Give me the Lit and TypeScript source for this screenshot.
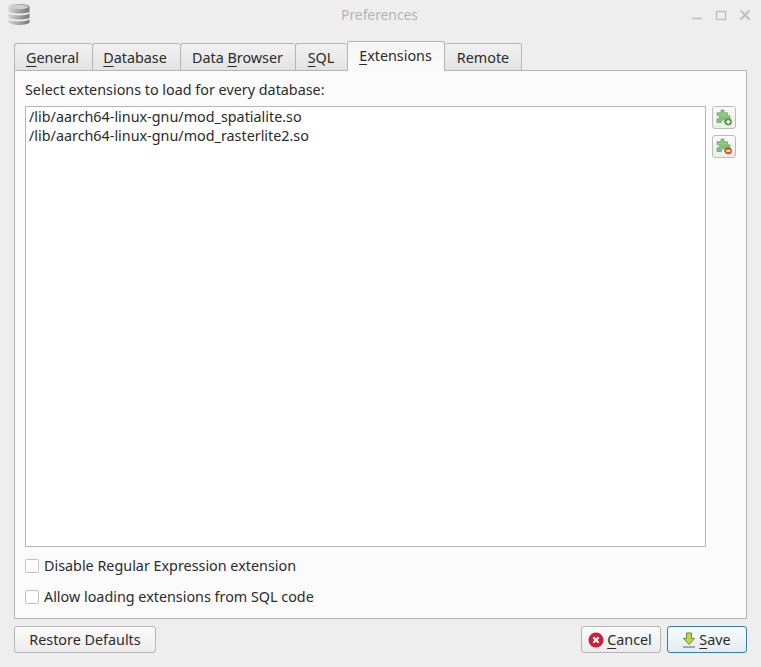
import { LitElement, html, css, svg } from "lit";
import { customElement } from "lit/decorators.js";

const puzzle = (badge: "add" | "remove") => svg`
<svg class="puzzle" width="16" height="17" viewBox="0 0 16 17">
  <path d="M5 1h3v1.500c0 .6.400.8.800 1.300h2.700v2.600h1a1.600 1.600 0 0 1 0 3.400h-1v3.700h-3v-1.400a1.500 1.500 0 0 0-3 0v1.400H1v-3.700h1a1.700 1.700 0 0 0 0-3.400H1V3.800h3.400c.4-.5.600-.7.600-1.300z" fill="#84c17c" stroke="#6aae63" stroke-width=".8"/>
  <path d="M2 4.800h8.500v1.500H2z" fill="#a2d69a" opacity=".6"/>
  <circle cx="12.300" cy="12.800" r="3.300" fill="${badge === "add" ? "#5a9e3a" : "#e25f14"}" stroke="${badge === "add" ? "#3f7f28" : "#b8480c"}" stroke-width=".6"/>
  ${badge === "add"
    ? svg`<path d="M12.300 10.800v4M10.300 12.800h4" stroke="#fff" stroke-width="1.500"/>`
    : svg`<path d="M10.300 12.800h4" stroke="#fff" stroke-width="1.700"/>`}
</svg>`;

@customElement("app-root")
export class AppRoot extends LitElement {
  static styles = css`
    :host {
      display: block;
      width: 761px;
      height: 667px;
      font-family: "Noto Sans", "Open Sans", sans-serif;
      font-size: 14.35px;
      color: #2b2b2b;
    }
    * { box-sizing: border-box; }
    .window {
      width: 761px;
      height: 667px;
      background: #eeeeee;
      display: flex;
      flex-direction: column;
      padding: 0 14px 14px;
    }
    .titlebar {
      height: 41px;
      margin: 0 -14px;
      padding: 4px 10px 0 8px;
      flex: none;
      display: grid;
      grid-template-columns: 1fr auto 1fr;
      align-items: start;
    }
    .appicon { display: block; }
    .title {
      font-size: 13.8px;
      color: #b4b4b4;
      line-height: 22px;
    }
    .winctl {
      display: flex;
      justify-content: flex-end;
      gap: 12px;
      margin-top: 5px;
    }
    .tabs {
      display: flex;
      align-items: flex-end;
      height: 30px;
      flex: none;
      position: relative;
      z-index: 1;
      margin-bottom: -1px;
    }
    .tab {
      height: 28px;
      border: 1px solid #b5b5b5;
      border-right: 0;
      border-radius: 3px 3px 0 0;
      background: linear-gradient(#f1f1f1, #e3e3e3);
      text-align: center;
      line-height: 28px;
      white-space: nowrap;
      color: #2b2b2b;
    }
    .tab.last { border-right: 1px solid #b5b5b5; }
    .tab.active {
      height: 30px;
      background: linear-gradient(#f6f6f6, #fbfbfb);
      border-right: 1px solid #b5b5b5;
      border-bottom: 0;
      line-height: 27px;
    }
    .tab.after { border-left: 0; }
    .t-general { width: 78px; padding-right: 2px; }
    .t-database { width: 88px; padding-right: 3px; }
    .t-browser { width: 115px; padding-right: 1px; }
    .t-sql { width: 52px; padding-right: 1px; }
    .t-ext { width: 98px; padding-right: 1px; }
    .t-remote { width: 77px; }
    u { text-decoration-thickness: 1px; text-underline-offset: 3px; }
    .pane {
      flex: 1;
      background: #fbfbfb;
      border: 1px solid #b5b5b5;
      padding: 9px 10px 11px;
      display: flex;
      flex-direction: column;
      min-height: 0;
    }
    .label { line-height: 20px; height: 26px; }
    .mid { flex: 1; display: flex; gap: 6px; min-height: 0; }
    .list {
      width: 681px;
      height: 441px;
      background: #fff;
      border: 1px solid #b5b5b5;
      padding: 0 3px;
      line-height: 19px;
    }
    .side { display: flex; flex-direction: column; gap: 6px; }
    .iconbtn {
      width: 24px;
      height: 23px;
      border: 1px solid #bdbdbd;
      border-radius: 3px;
      background: linear-gradient(#fafafa, #ececec);
      display: flex;
      align-items: center;
      justify-content: center;
    }
    .check {
      display: flex;
      align-items: center;
      gap: 5px;
      line-height: 20px;
      height: 20px;
    }
    .check.first { margin-bottom: 11px; }
    .box {
      width: 14px;
      height: 14px;
      background: #fff;
      border: 1px solid #c2c2c2;
      border-radius: 2px;
      flex: none;
    }
    .footer {
      display: flex;
      flex: none;
      margin-top: 7px;
      height: 27px;
      gap: 6px;
    }
    .btn {
      height: 27px;
      border: 1px solid #b5b5b5;
      border-radius: 3px;
      background: linear-gradient(#fbfbfb, #ececec);
      display: flex;
      align-items: center;
      justify-content: center;
      gap: 3px;
      white-space: nowrap;
    }
    .btn.restore { width: 142px; margin-right: auto; }
    .btn.action { width: 80px; padding-right: 2px; }
    .btn.default {
      gap: 2px;
      border-color: #3a7ba8;
      background: linear-gradient(#f8fbfd, #e3ecf2);
    }
  `;

  render() {
    return html`
      <div class="window">
        <div class="titlebar">
          <svg class="appicon" width="22" height="22" viewBox="0 0 22 22">
            <defs>
              <linearGradient id="db" x1="0" x2="1" y1="0" y2="0">
                <stop offset="0" stop-color="#d8d8d8"/><stop offset=".45" stop-color="#a8a8a8"/><stop offset="1" stop-color="#777"/>
              </linearGradient>
            </defs>
            <path d="M.5 3c0-4 21-4 21 0v15c0 4-21 4-21 0z" fill="url(#db)"/>
            <ellipse cx="11" cy="3" rx="9.500" ry="2.200" fill="#cfcfcf"/>
            <path d="M.5 7.500c2 2.800 19 2.800 21 0v1.800c-2 2.800-19 2.800-21 0zM.5 13.500c2 2.800 19 2.800 21 0v1.800c-2 2.800-19 2.800-21 0z" fill="#f2f2f2"/>
          </svg>
          <div class="title">Preferences</div>
          <div class="winctl">
            <svg width="12" height="12" viewBox="0 0 12 12"><path d="M1 9.500h10" stroke="#bdbdbd" stroke-width="1.600"/></svg>
            <svg width="12" height="12" viewBox="0 0 12 12"><rect x="1.500" y="2.500" width="9" height="8" fill="none" stroke="#bdbdbd" stroke-width="1.300"/></svg>
            <svg width="12" height="12" viewBox="0 0 12 12"><path d="M1.500 1.500l9 9M10.500 1.500l-9 9" stroke="#bdbdbd" stroke-width="1.800"/></svg>
          </div>
        </div>
        <div class="tabs">
          <div class="tab t-general"><u>G</u>eneral</div>
          <div class="tab t-database"><u>D</u>atabase</div>
          <div class="tab t-browser">Data <u>B</u>rowser</div>
          <div class="tab t-sql"><u>S</u>QL</div>
          <div class="tab active t-ext"><u>E</u>xtensions</div>
          <div class="tab last after t-remote">Remote</div>
        </div>
        <div class="pane">
          <div class="label">Select extensions to load for every database:</div>
          <div class="mid">
            <div class="list">
              <div>/lib/aarch64-linux-gnu/mod_spatialite.so</div>
              <div>/lib/aarch64-linux-gnu/mod_rasterlite2.so</div>
            </div>
            <div class="side">
              <div class="iconbtn">${puzzle("add")}</div>
              <div class="iconbtn">${puzzle("remove")}</div>
            </div>
          </div>
          <div class="check first"><span class="box"></span>Disable Regular Expression extension</div>
          <div class="check"><span class="box"></span>Allow loading extensions from SQL code</div>
        </div>
        <div class="footer">
          <div class="btn restore">Restore Defaults</div>
          <div class="btn action">
            <svg width="16" height="16" viewBox="0 0 16 16"><circle cx="8" cy="8" r="7.500" fill="#cc1f3a"/><path d="M5.300 5.300l5.400 5.400M10.700 5.300l-5.400 5.400" stroke="#fff" stroke-width="2"/></svg>
            <span><u>C</u>ancel</span>
          </div>
          <div class="btn action default">
            <svg width="16" height="16" viewBox="0 0 16 16"><path d="M5.500 1h5v5.500h3L8 12.500 2.500 6.500h3z" fill="#b9d94c" stroke="#6f8f2a"/><path d="M2 15h12" stroke="#777" stroke-width="1.200"/></svg>
            <span><u>S</u>ave</span>
          </div>
        </div>
      </div>
    `;
  }
}
